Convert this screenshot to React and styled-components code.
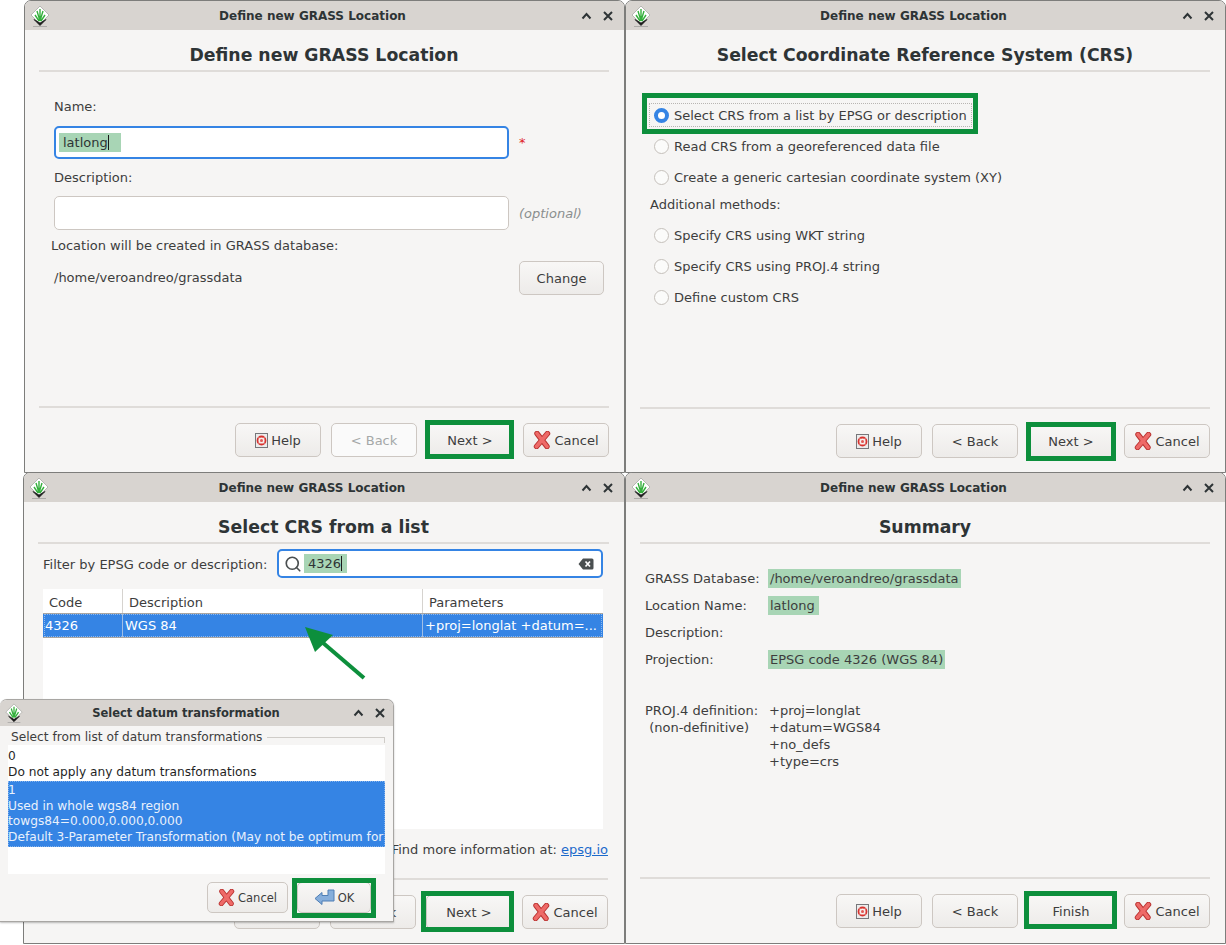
import styled, { createGlobalStyle } from "styled-components";
import { Search } from "lucide-react";

const GlobalStyle = createGlobalStyle`
    html, body {
        margin: 0;
        padding: 0;
        background: #ffffff;
    }
    body {
        font-family: "DejaVu Sans", sans-serif;
        font-size: 13px;
        color: #3d3d3d;
    }
`

const GREEN = "#0d8f3c";
const BLUE = "#3584e4";

function GrassLogo({ size = 22 }) {
    return (
        <svg width={size} height={size} viewBox="0 0 22 22">
            <polygon points="11,1 20,10 11,19 2,10" fill="#ffffff" stroke="#a9a9a5" strokeWidth="0.8" />
            <path d="M11 16 L8 6 M11 16 L11 4 M11 16 L14 6 M10 16 L6 10 M12 16 L16 10" stroke="#35b03d" strokeWidth="1.4" fill="none" />
            <path d="M5 14.5 L11 20.5 L17 14.5 L11 18 Z" fill="#1c1c1c" stroke="#1c1c1c" strokeWidth="0.8" />
            <path d="M4 21.5 H18" stroke="#9a9a96" strokeWidth="0.7" />
        </svg>
    );
}

function ChevronUp() {
    return (
        <svg width="11" height="8" viewBox="0 0 11 8">
            <path d="M1.5 6.5 L5.5 2 L9.5 6.5" fill="none" stroke="#2e3436" strokeWidth="2" />
        </svg>
    );
}

function CloseX() {
    return (
        <svg width="10" height="10" viewBox="0 0 10 10">
            <path d="M1 1 L9 9 M9 1 L1 9" fill="none" stroke="#2e3436" strokeWidth="2" />
        </svg>
    );
}

function HelpIcon() {
    return (
        <svg width="13" height="15" viewBox="0 0 13 15">
            <rect x="0.5" y="0.5" width="12" height="14" fill="#ececec" stroke="#77777a" />
            <circle cx="6.5" cy="7.5" r="4" fill="#f6f1ef" stroke="#d8322e" strokeWidth="1.8" />
            <path d="M3.6 4.6 L9.4 10.4 M9.4 4.6 L3.6 10.4" stroke="#f3e4e2" strokeWidth="1.1" />
            <circle cx="6.5" cy="7.5" r="1.5" fill="#e25a56" />
        </svg>
    );
}

function CancelIcon({ size = 18 }) {
    return (
        <svg width={size} height={size} viewBox="0 0 18 18">
            <path d="M4 2.5 L14 15.5 M14.5 2.5 L3.5 15.5" stroke="#b8312f" strokeWidth="5.4" strokeLinecap="round" fill="none" />
            <path d="M4 2.5 L14 15.5 M14.5 2.5 L3.5 15.5" stroke="#ee6a68" strokeWidth="3.6" strokeLinecap="round" fill="none" />
        </svg>
    );
}

function OkIcon() {
    return (
        <svg width="21" height="19" viewBox="0 0 21 19">
            <path d="M1 10.5 L8 4.5 L8 7.5 L14 7.5 L14 2 L20 2 L20 13 L8 13 L8 16.5 Z" fill="#86aedb" stroke="#4f7fb5" strokeWidth="1" strokeLinejoin="round" />
        </svg>
    );
}

function ClearIcon() {
    return (
        <svg width="16" height="12" viewBox="0 0 16 12">
            <path d="M5 0.5 H14 A1.5 1.5 0 0 1 15.5 2 V10 A1.5 1.5 0 0 1 14 11.5 H5 L0.5 6 Z" fill="#4a4f50" />
            <path d="M7.5 3.5 L12 8.5 M12 3.5 L7.5 8.5" stroke="#ffffff" strokeWidth="1.7" />
        </svg>
    );
}

const Canvas = styled.div`
    position: relative;
    width: 1226px;
    height: 945px;
    overflow: hidden;
    background: #ffffff;
`

const Window = styled.div`
    position: absolute;
    left: ${(p) => p.$x}px;
    top: ${(p) => p.$y}px;
    width: ${(p) => p.$w}px;
    height: ${(p) => p.$h}px;
    box-sizing: border-box;
    display: flex;
    flex-direction: column;
    background: #f6f5f4;
    border: 1px solid #7d7d7b;
    border-top-left-radius: 7px;
    border-top-right-radius: 7px;
    overflow: hidden;
`

const TitleBar = styled.div`
    flex: none;
    height: ${(p) => (p.$small ? 26 : 29)}px;
    display: grid;
    grid-template-columns: 28px 1fr 50px;
    align-items: center;
    background: #d8d4d0;
    padding: 0 6px 0 4px;
`

const TitleLogo = styled.div`
    display: flex;
    align-items: center;
`

const TitleText = styled.div`
    text-align: center;
    font-weight: bold;
    font-size: ${(p) => (p.$small ? 11.5 : 12)}px;
    padding-left: ${(p) => (p.$small ? 3 : 0)}px;
    color: #2e3436;
`

const TitleControls = styled.div`
    display: flex;
    justify-content: flex-end;
    align-items: center;
    gap: 11px;
    padding-right: ${(p) => (p.$small ? 2 : 5)}px;
`

const Heading = styled.h1`
    flex: none;
    margin: 0 15px 0 14px;
    height: 42px;
    padding-top: 10px;
    box-sizing: border-box;
    display: flex;
    align-items: center;
    justify-content: center;
    font-size: 17.3px;
    font-weight: bold;
    color: #2e3436;
    border-bottom: 2px solid #dfdcd9;
`

const Content = styled.div`
    flex: 1;
    min-height: 0;
    display: flex;
    flex-direction: column;
`

const Footer = styled.div`
    flex: none;
    margin: 0 ${(p) => p.$right || 15}px 0 14px;
    padding: 15px 0 ${(p) => p.$bottom || 14}px;
    border-top: 2px solid #dfdcd9;
    display: flex;
    justify-content: flex-end;
    gap: 10px;
`

const Button = styled.div`
    position: relative;
    box-sizing: border-box;
    width: ${(p) => p.$w || 86}px;
    height: 34px;
    display: flex;
    align-items: center;
    justify-content: center;
    gap: 3px;
    border: 1px solid #cdc7c2;
    border-radius: 5px;
    background: linear-gradient(#f8f7f6, #edebe9);
    color: ${(p) => (p.$disabled ? "#a5a8a8" : "#3d3d3d")};
    font-size: 13px;
    ${(p) => p.$disabled && "background: #fafafa;"}
    ${(p) => p.$mark && `
        &::after {
            content: "";
            position: absolute;
            inset: ${p.$mark};
            border: 5px solid ${GREEN};
        }
    `}
`

const Hl = styled.span`
    background: #a8d5b5;
    padding: ${(p) => p.$pad || "2px 2px"};
`

/* first window */
const FormArea = styled.div`
    padding: 27px 20px 0 29px;
    display: flex;
    flex-direction: column;
`

const Label = styled.div`
    line-height: 16px;
    margin-bottom: ${(p) => p.$gap || 0}px;
`

const DbLabel = styled(Label)`
    margin-left: -3px;
`

const FieldRow = styled.div`
    display: flex;
    align-items: center;
    gap: 10px;
    margin-bottom: ${(p) => p.$gap || 0}px;
`

const TextBox = styled.div`
    box-sizing: border-box;
    flex: none;
    width: ${(p) => p.$w || 455}px;
    height: ${(p) => p.$h || 33}px;
    display: flex;
    align-items: center;
    padding: 0 3px;
    background: #ffffff;
    border-radius: 5px;
    border: ${(p) => (p.$focus ? `2px solid ${BLUE}` : "1px solid #cdc7c2")};
    color: #2e3436;
`

const Caret = styled.span`
    display: inline-block;
    width: 1px;
    height: 15px;
    vertical-align: -3px;
    background: #1a1a1a;
`

const Required = styled.span`
    color: #e01b24;
    font-size: 13px;
`

const Optional = styled.span`
    color: #8a8e8e;
    font-style: italic;
`

const DbRow = styled.div`
    display: flex;
    align-items: center;
    justify-content: space-between;
    margin-top: 7px;
`

const DbPath = styled.span`
    margin-bottom: 2px;
`

/* second window */
const RadioList = styled.div`
    padding: 31px 0 0 28px;
    display: flex;
    flex-direction: column;
`

const RadioRow = styled.div`
    position: relative;
    align-self: flex-start;
    height: 24px;
    margin-bottom: 7px;
    display: flex;
    align-items: center;
    gap: 5px;
    box-sizing: border-box;
    ${(p) => p.$mark && `
        margin-left: -5px;
        padding: 0 4px;
        border: 1px dotted #b8b5b2;
        &::after {
            content: "";
            position: absolute;
            inset: -11px -7px -8px -8px;
            border: 5px solid ${GREEN};
        }
    `}
`

const Radio = styled.span`
    box-sizing: border-box;
    width: 15px;
    height: 15px;
    border-radius: 50%;
    background: ${(p) => (p.$on ? "#ffffff" : "#fbfbfa")};
    border: ${(p) => (p.$on ? `4px solid ${BLUE}` : "1px solid #c5c0bb")};
`

const GroupTitle = styled.div`
    height: 18px;
    line-height: 18px;
    margin-left: -4px;
    margin-bottom: 9px;
`

/* third window */
const FilterRow = styled.div`
    margin-top: 5px;
    padding: 0 21px 0 19px;
    display: flex;
    align-items: center;
    justify-content: space-between;
`

const FilterLabel = styled.span`
    padding-top: 2px;
`

const SearchBox = styled(TextBox)`
    width: 326px;
    height: 29px;
    padding: 0 7px 0 5px;
    gap: 2px;
`

const ClearSlot = styled.span`
    margin-left: auto;
    display: flex;
`

const Table = styled.div`
    margin: 11px 21px 0 19px;
    height: 240px;
    background: #ffffff;
`

const TableRow = styled.div`
    display: grid;
    grid-template-columns: 80px 300px 180px;
    height: ${(p) => (p.$selected ? 23 : 24)}px;
    align-items: center;
    ${(p) => p.$selected && `
        background: ${BLUE};
        color: #ffffff;
        border-top: 1px solid #a9a5a0;
        border-bottom: 1px solid #a9a5a0;
        box-sizing: content-box;
        outline: 1px dotted #8db8ee;
        outline-offset: -2px;
    `}
`

const Cell = styled.div`
    height: 100%;
    box-sizing: border-box;
    display: flex;
    align-items: center;
    padding-left: ${(p) => (p.$selected ? 2 : 6)}px;
    padding-top: ${(p) => (p.$selected ? 0 : 2)}px;
    border-right: 1px solid ${(p) => (p.$selected ? "#a0bfe6" : "#d6d3cf")};
    white-space: nowrap;
    overflow: hidden;
    &:last-child {
        border-right: 0;
    }
`

const InfoLine = styled.div`
    margin: 13px 16px 0 0;
    text-align: right;
`

const DocLink = styled.a`
    color: #1b6acb;
    text-decoration: underline;
`

const GreenArrow = styled.svg`
    position: absolute;
    left: 300px;
    top: 622px;
`

/* fourth window */
const SummaryGrid = styled.div`
    padding: 21px 0 0 19px;
    display: grid;
    grid-template-columns: 123px 1fr;
    grid-auto-rows: 27px;
    align-items: center;
`

const DefBlock = styled.div`
    margin: 29px 0 0 19px;
    display: grid;
    grid-template-columns: 124px 1fr;
    line-height: 17px;
`

const DefLabel = styled.div`
    white-space: pre;
`

/* datum dialog */
const Dialog = styled(Window)`
    font-size: 12.2px;
    border-left: 0;
    box-shadow: 0 1px 2px rgba(0, 0, 0, 0.25);
    border-color: #a8a6a3;
    background: #f6f5f4;
    z-index: 2;
`

const GroupLegend = styled.div`
    margin: 3px 8px 0 11px;
    height: 16px;
    display: flex;
    align-items: center;
    gap: 5px;
    &::after {
        content: "";
        flex: 1;
        height: 5px;
        margin-top: 5px;
        border-top: 1px solid #cfccc8;
        border-right: 1px solid #cfccc8;
    }
`

const DatumList = styled.div`
    margin: 0 8px 0 8px;
    height: 129px;
    padding-top: 4px;
    box-sizing: border-box;
    background: #ffffff;
    color: #1f1f1f;
    line-height: 15.5px;
    white-space: nowrap;
    overflow: hidden;
`

const DatumItem = styled.div`
    margin-bottom: 1px;
    ${(p) => p.$selected && `
        background: ${BLUE};
        color: #e9f1fc;
        padding: 2px 0;
        outline: 1px dotted #86b3ec;
        outline-offset: -1px;
    `}
`

const DialogActions = styled.div`
    display: flex;
    justify-content: flex-end;
    gap: 9px;
    padding: 8px 22px 0 0;
`

const SmallButton = styled(Button)`
    height: 31px;
    font-size: 11.5px;
`

export default function App() {
    const help = <Button><HelpIcon />Help</Button>;
    const cancel = <Button><CancelIcon />Cancel</Button>;

    return (
        <Canvas>
            <GlobalStyle />

            <Window $x={24} $y={0} $w={601} $h={473}>
                <TitleBar>
                    <TitleLogo><GrassLogo /></TitleLogo>
                    <TitleText>Define new GRASS Location</TitleText>
                    <TitleControls><ChevronUp /><CloseX /></TitleControls>
                </TitleBar>
                <Heading>Define new GRASS Location</Heading>
                <Content>
                    <FormArea>
                        <Label $gap={11}>Name:</Label>
                        <FieldRow $gap={11}>
                            <TextBox $focus>
                                <Hl $pad="2px 12px 2px 4px">latlong<Caret /></Hl>
                            </TextBox>
                            <Required>*</Required>
                        </FieldRow>
                        <Label $gap={10}>Description:</Label>
                        <FieldRow $gap={8}>
                            <TextBox $h={34} />
                            <Optional>(optional)</Optional>
                        </FieldRow>
                        <DbLabel>Location will be created in GRASS database:</DbLabel>
                        <DbRow>
                            <DbPath>/home/veroandreo/grassdata</DbPath>
                            <Button $w={85}>Change</Button>
                        </DbRow>
                    </FormArea>
                </Content>
                <Footer $bottom={15}>
                    {help}
                    <Button $disabled>&lt; Back</Button>
                    <Button $mark="-4px -2px -3px -3px">Next &gt;</Button>
                    {cancel}
                </Footer>
            </Window>

            <Window $x={625} $y={0} $w={601} $h={473}>
                <TitleBar>
                    <TitleLogo><GrassLogo /></TitleLogo>
                    <TitleText>Define new GRASS Location</TitleText>
                    <TitleControls><ChevronUp /><CloseX /></TitleControls>
                </TitleBar>
                <Heading>Select Coordinate Reference System (CRS)</Heading>
                <Content>
                    <RadioList>
                        <RadioRow $mark><Radio $on />Select CRS from a list by EPSG or description</RadioRow>
                        <RadioRow><Radio />Read CRS from a georeferenced data file</RadioRow>
                        <RadioRow><Radio />Create a generic cartesian coordinate system (XY)</RadioRow>
                        <GroupTitle>Additional methods:</GroupTitle>
                        <RadioRow><Radio />Specify CRS using WKT string</RadioRow>
                        <RadioRow><Radio />Specify CRS using PROJ.4 string</RadioRow>
                        <RadioRow><Radio />Define custom CRS</RadioRow>
                    </RadioList>
                </Content>
                <Footer>
                    {help}
                    <Button>&lt; Back</Button>
                    <Button $mark="-3px -3px -4px -3px">Next &gt;</Button>
                    {cancel}
                </Footer>
            </Window>

            <Window $x={23} $y={472} $w={602} $h={472}>
                <TitleBar>
                    <TitleLogo><GrassLogo /></TitleLogo>
                    <TitleText>Define new GRASS Location</TitleText>
                    <TitleControls><ChevronUp /><CloseX /></TitleControls>
                </TitleBar>
                <Heading>Select CRS from a list</Heading>
                <Content>
                    <FilterRow>
                        <FilterLabel>Filter by EPSG code or description:</FilterLabel>
                        <SearchBox $focus>
                            <Search size={18} color="#4a4f50" strokeWidth={2.2} />
                            <Hl $pad="2px 5px 2px 4px">4326<Caret /></Hl>
                            <ClearSlot><ClearIcon /></ClearSlot>
                        </SearchBox>
                    </FilterRow>
                    <Table>
                        <TableRow>
                            <Cell>Code</Cell>
                            <Cell>Description</Cell>
                            <Cell>Parameters</Cell>
                        </TableRow>
                        <TableRow $selected>
                            <Cell $selected>4326</Cell>
                            <Cell $selected>WGS 84</Cell>
                            <Cell $selected>+proj=longlat +datum=...</Cell>
                        </TableRow>
                    </Table>
                    <InfoLine>Find more information at: <DocLink>epsg.io</DocLink></InfoLine>
                </Content>
                <Footer $right={16}>
                    {help}
                    <Button>&lt; Back</Button>
                    <Button $mark="-5px -3px -4px -6px">Next &gt;</Button>
                    {cancel}
                </Footer>
            </Window>

            <Window $x={625} $y={472} $w={601} $h={472}>
                <TitleBar>
                    <TitleLogo><GrassLogo /></TitleLogo>
                    <TitleText>Define new GRASS Location</TitleText>
                    <TitleControls><ChevronUp /><CloseX /></TitleControls>
                </TitleBar>
                <Heading>Summary</Heading>
                <Content>
                    <SummaryGrid>
                        <span>GRASS Database:</span><span><Hl>/home/veroandreo/grassdata</Hl></span>
                        <span>Location Name:</span><span><Hl $pad="2px 4px 2px 2px">latlong</Hl></span>
                        <span>Description:</span><span />
                        <span>Projection:</span><span><Hl>EPSG code 4326 (WGS 84)</Hl></span>
                    </SummaryGrid>
                    <DefBlock>
                        <DefLabel>{"PROJ.4 definition:\n (non-definitive)"}</DefLabel>
                        <div>+proj=longlat<br />+datum=WGS84<br />+no_defs<br />+type=crs</div>
                    </DefBlock>
                </Content>
                <Footer $bottom={15}>
                    {help}
                    <Button>&lt; Back</Button>
                    <Button $mark="-4px -4px -2px -5px">Finish</Button>
                    {cancel}
                </Footer>
            </Window>

            <GreenArrow width="70" height="60" viewBox="0 0 70 60">
                <path d="M64 56 L22 20" stroke={GREEN} strokeWidth="4" fill="none" />
                <polygon points="5,5 33,13 15,30" fill={GREEN} />
            </GreenArrow>

            <Dialog $x={0} $y={699} $w={394} $h={223}>
                <TitleBar $small>
                    <TitleLogo><GrassLogo size={20} /></TitleLogo>
                    <TitleText $small>Select datum transformation</TitleText>
                    <TitleControls $small><ChevronUp /><CloseX /></TitleControls>
                </TitleBar>
                <GroupLegend>Select from list of datum transformations</GroupLegend>
                <DatumList>
                    <DatumItem>0<br />Do not apply any datum transformations</DatumItem>
                    <DatumItem $selected>
                        1<br />
                        Used in whole wgs84 region<br />
                        towgs84=0.000,0.000,0.000<br />
                        Default 3-Parameter Transformation (May not be optimum for
                    </DatumItem>
                </DatumList>
                <DialogActions>
                    <SmallButton $w={81}><CancelIcon size={17} />Cancel</SmallButton>
                    <SmallButton $w={74} $mark="-5px -6px -6px -6px"><OkIcon />OK</SmallButton>
                </DialogActions>
            </Dialog>
        </Canvas>
    );
}
